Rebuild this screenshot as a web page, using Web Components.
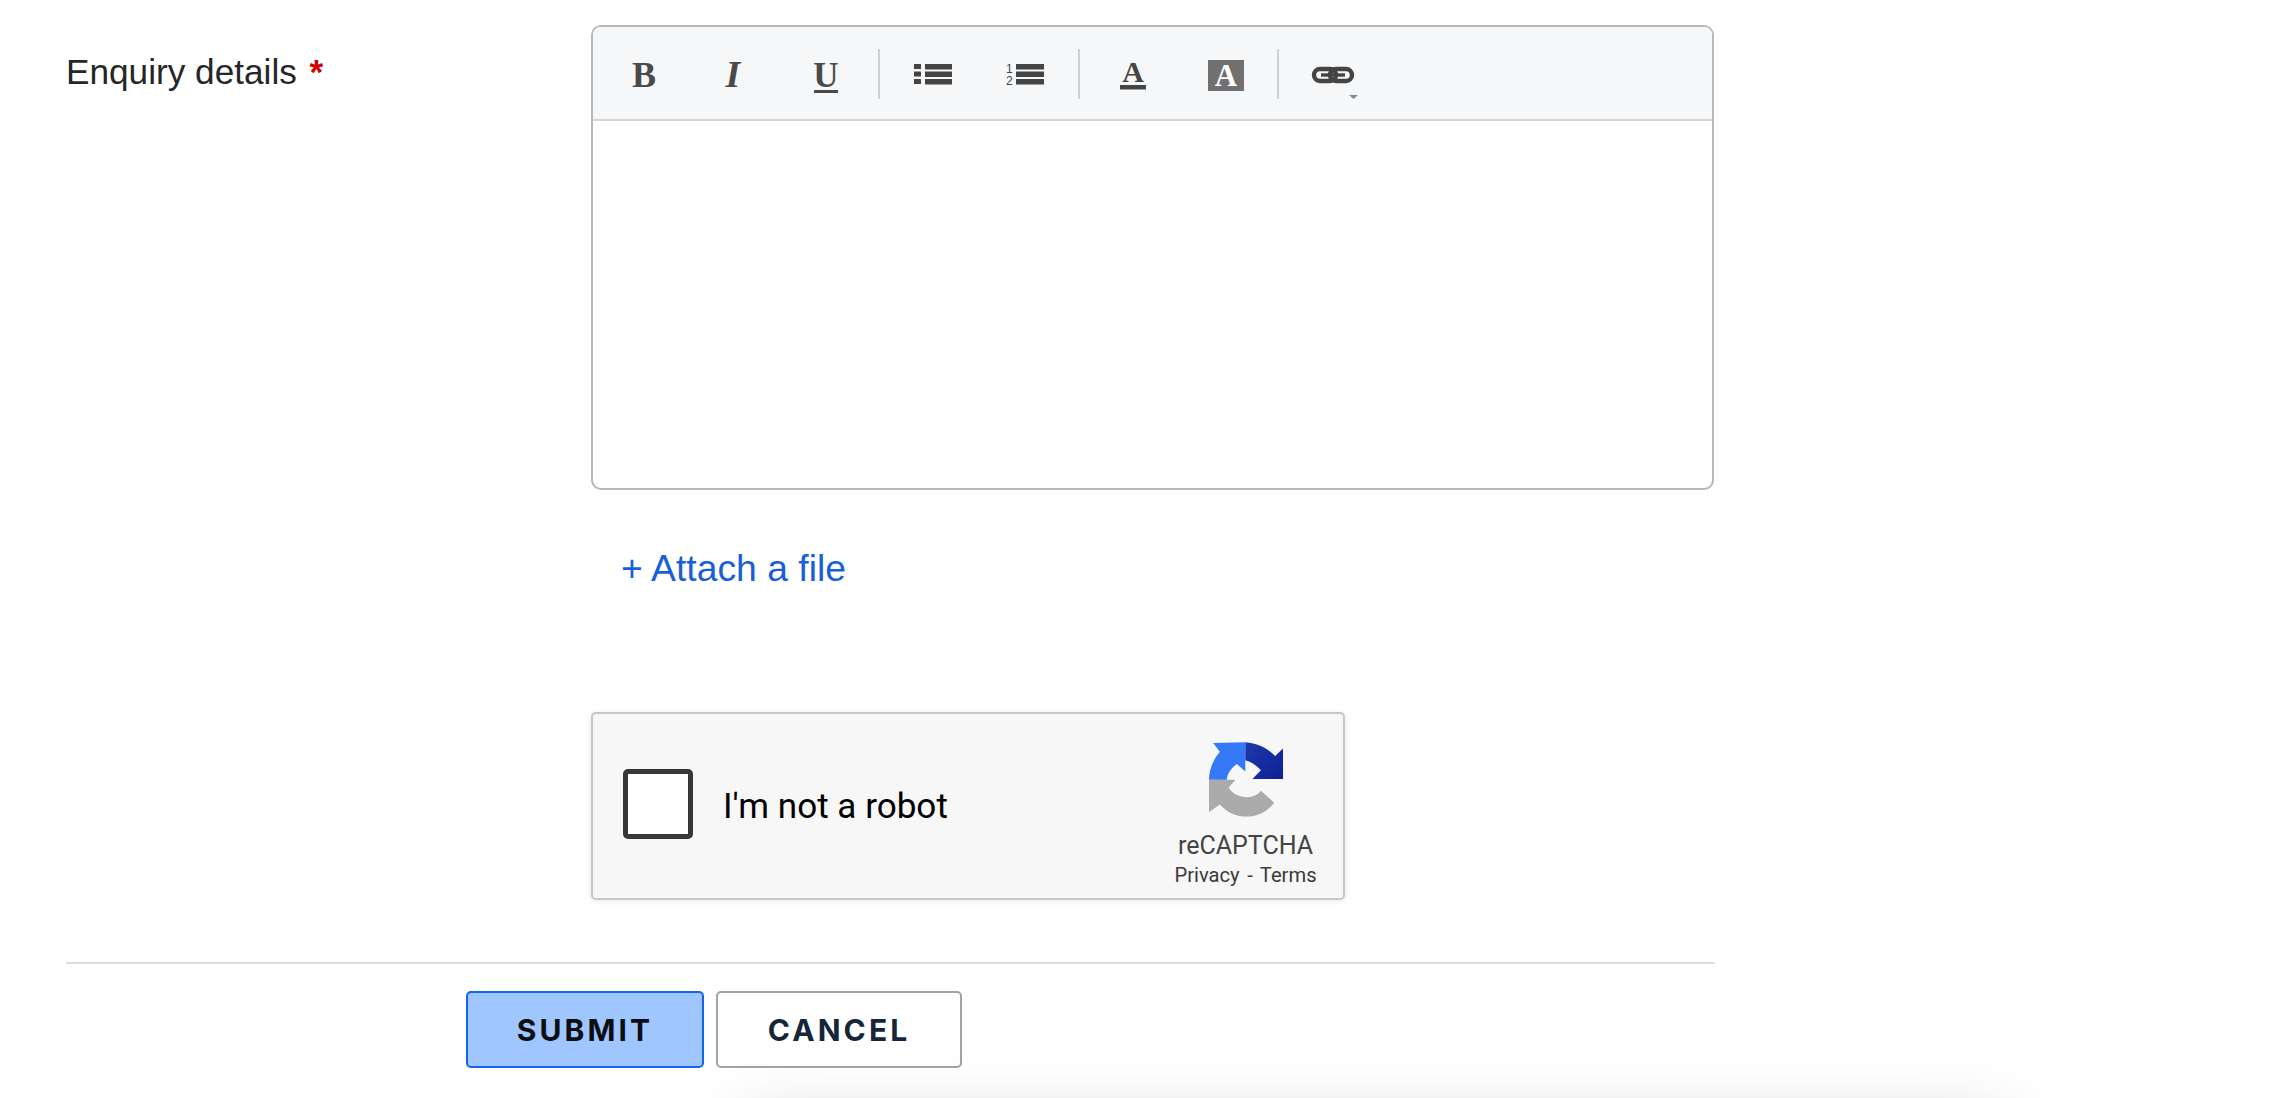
<!DOCTYPE html>
<html lang="en">
<head>
<meta charset="utf-8">
<title>Enquiry form</title>
<style>
html,body{margin:0;padding:0;background:#fff;height:100%;overflow:hidden}
body{font-family:"Liberation Sans",Arial,sans-serif}
</style>
</head>
<body>
<x-page>
  <x-field>
    <span slot="label">Enquiry details</span>
    <x-editor></x-editor>
    <x-attach>+ Attach a file</x-attach>
    <x-recaptcha></x-recaptcha>
  </x-field>
  <x-actions>
    <x-button variant="primary">SUBMIT</x-button>
    <x-button>CANCEL</x-button>
  </x-actions>
</x-page>
<x-floating-panel></x-floating-panel>
<script>
function def(name, css, html, setup){
  customElements.define(name, class extends HTMLElement{
    constructor(){super();const r=this.attachShadow({mode:'open'});
      r.innerHTML='<style>'+css+'</style>'+(typeof html==='function'?html(this):html);}
    connectedCallback(){ if(setup) setup(this); }
  });
}
def('x-page',':host{display:block;box-sizing:border-box;padding:25px 0 0 66px;width:1715px}','<slot></slot>');
def('x-field',`:host{display:grid;grid-template-columns:525px 1123px;color:#222}
.label{font:35.2px/44px "Liberation Sans",Arial,sans-serif;padding-top:25px;grid-row:1;color:#262626;white-space:nowrap}
.star{color:#cc0000;font-weight:700;margin-left:3px}
.main{grid-column:2;grid-row:1}`,
`<div class="label"><slot name="label"></slot><span class="star"> *</span></div><div class="main"><slot></slot></div>`);

def('x-editor',`:host{display:block;box-sizing:border-box;height:465px;border:2px solid #b8b8b8;border-radius:10px;overflow:hidden;background:#fff}
.bar{display:flex;box-sizing:border-box;height:94px;background:#f6f7f9;border-bottom:2px solid #d2d4d7;padding:0 0 0 5px;align-items:flex-start}`,
`<div class="bar">
<x-tool icon="b"></x-tool><x-tool icon="i"></x-tool><x-tool icon="u"></x-tool><x-sep></x-sep>
<x-tool icon="ul"></x-tool><x-tool icon="ol"></x-tool><x-sep style="margin-left:7px"></x-sep>
<x-tool icon="color"></x-tool><x-tool icon="bg" style="margin-left:-1px"></x-tool><x-sep style="margin-left:7px"></x-sep>
<x-tool icon="link"></x-tool></div>`);
def('x-sep',`:host{display:block;width:2px;height:50px;margin:22px 7px 0 4px;background:#cdd1d5;flex:none}`,'');

const serif='font-family:\'Liberation Serif\',serif';
const icons={
 b:`<text x="46" y="60" text-anchor="middle" style="${serif};font-weight:700;font-size:36px" fill="#4a4a4a">B</text>`,
 i:`<text x="43" y="60" text-anchor="middle" style="${serif};font-weight:700;font-style:italic;font-size:38px" fill="#4a4a4a">I</text>`,
 u:`<text x="44" y="60" text-anchor="middle" style="${serif};font-weight:700;font-size:35px" fill="#4a4a4a">U</text><rect x="32" y="63" width="24" height="3" fill="#4a4a4a"/>`,
 ul:`<g fill="#444"><rect x="27" y="37" width="7" height="5"/><rect x="27" y="44.500" width="7" height="5"/><rect x="27" y="52" width="7" height="5"/><rect x="38" y="37" width="27" height="5.500"/><rect x="38" y="44.500" width="27" height="5.500"/><rect x="38" y="52" width="27" height="5.500"/></g>`,
 ol:`<g fill="#444"><rect x="37" y="37" width="28" height="5.500"/><rect x="37" y="44.500" width="28" height="5.500"/><rect x="37" y="52" width="28" height="5.500"/><text x="27" y="46" font-family="Liberation Sans" font-size="12" text-anchor="start">1</text><text x="27" y="58" font-family="Liberation Sans" font-size="12">2</text></g>`,
 color:`<text x="46" y="55" text-anchor="middle" style="${serif};font-weight:700;font-size:30px" fill="#454545">A</text><rect x="33" y="58" width="26" height="4.500" fill="#444"/>`,
 bg:`<rect x="30" y="33" width="36" height="31" fill="#707070"/><text x="48" y="59" text-anchor="middle" style="${serif};font-weight:700;font-size:31px" fill="#fff">A</text>`,
 link:`<g fill="none" stroke="#444" stroke-width="4.400"><rect x="28" y="42" width="22" height="12" rx="6"/><rect x="44" y="42" width="22" height="12" rx="6"/></g><rect x="35" y="46.300" width="24" height="3.400" fill="#444"/><path d="M63 68h9l-4.500 4z" fill="#888"/>`
};
def('x-tool',`:host{display:block;width:92px;height:92px;flex:none}svg{display:block}`,
 h=>`<svg width="92" height="92" viewBox="0 0 92 92">${icons[h.getAttribute('icon')]||''}</svg>`);

def('x-attach',`:host{display:block;margin:56px 0 122px;padding-left:30px;font:37.300px/44px "Liberation Sans",Arial,sans-serif;color:#1a5fd8;cursor:pointer}`,'<slot></slot>');

def('x-recaptcha',`:host{display:flex;box-sizing:border-box;width:754px;height:188px;background:#f7f7f7;border:2px solid #c6c6c6;border-radius:5px;box-shadow:0 1px 6px rgba(0,0,0,.09);font-family:Roboto,sans-serif;align-items:flex-start}
.box{box-sizing:border-box;width:70px;height:70px;margin:55px 0 0 30px;background:#fff;border:5.500px solid #373737;border-radius:5px;flex:none}
.txt{margin:0 0 0 30px;font-size:35.100px;line-height:184px;color:#000;white-space:nowrap}
.r{margin-left:auto;width:195px;flex:none;display:flex;flex-direction:column;align-items:center;padding-top:28px}
svg{display:block}
.n{font-size:25px;line-height:30px;color:#444;margin-top:13px}
.p{font-size:20.200px;line-height:26px;color:#3a3a3a;margin-top:1px;white-space:pre;word-spacing:2.500px}`,
`<div class="box"></div><div class="txt">I'm not a robot</div>
<div class="r"><svg width="74" height="76" viewBox="30 22 218 222">
<defs><linearGradient id="g" x1="0" x2="1" y1="0" y2="1"><stop offset="0" stop-color="#1c3aa9"/><stop offset="1" stop-color="#0f1f96"/></linearGradient></defs>
<path fill="#ababab" d="M30 132H108L88 155C100 182 158 198 183 165L222 200C185 252 105 255 62 205L30 228Z"/>
<path fill="#3578f8" d="M30 132C30 100 45 70 62 50L42 24L137 22V108L112 86C97 97 85 112 82 132Z"/>
<path fill="url(#g)" d="M137 22C175 25 205 42 225 62L248 40V130H158L183 104C170 90 155 80 137 75Z"/>
</svg><div class="n">reCAPTCHA</div><div class="p">Privacy - Terms</div></div>`);

def('x-actions',`:host{display:flex;margin-top:62px;border-top:2px solid #dedede;padding:27px 0 0 400px;gap:12px;width:1249px}`,'<slot></slot>');
def('x-button',`:host{display:flex;box-sizing:border-box;height:77px;width:246px;align-items:center;justify-content:center;border:2px solid #a3a3a3;border-radius:5px;background:#fff;color:#15263b;font:700 30px/1 Inter,"Liberation Sans",Arial,sans-serif;letter-spacing:3.100px;cursor:pointer}
:host([variant=primary]){width:238px;background:#9fc6ff;border-color:#1464f0;color:#0b0f14}`,'<slot></slot>');
def('x-floating-panel',`:host{position:fixed;left:745px;width:1260px;top:1126px;height:80px;border-radius:8px;background:#fff;box-shadow:0 0 70px rgba(0,0,0,.22)}`,'');
</script>
</body>
</html>
